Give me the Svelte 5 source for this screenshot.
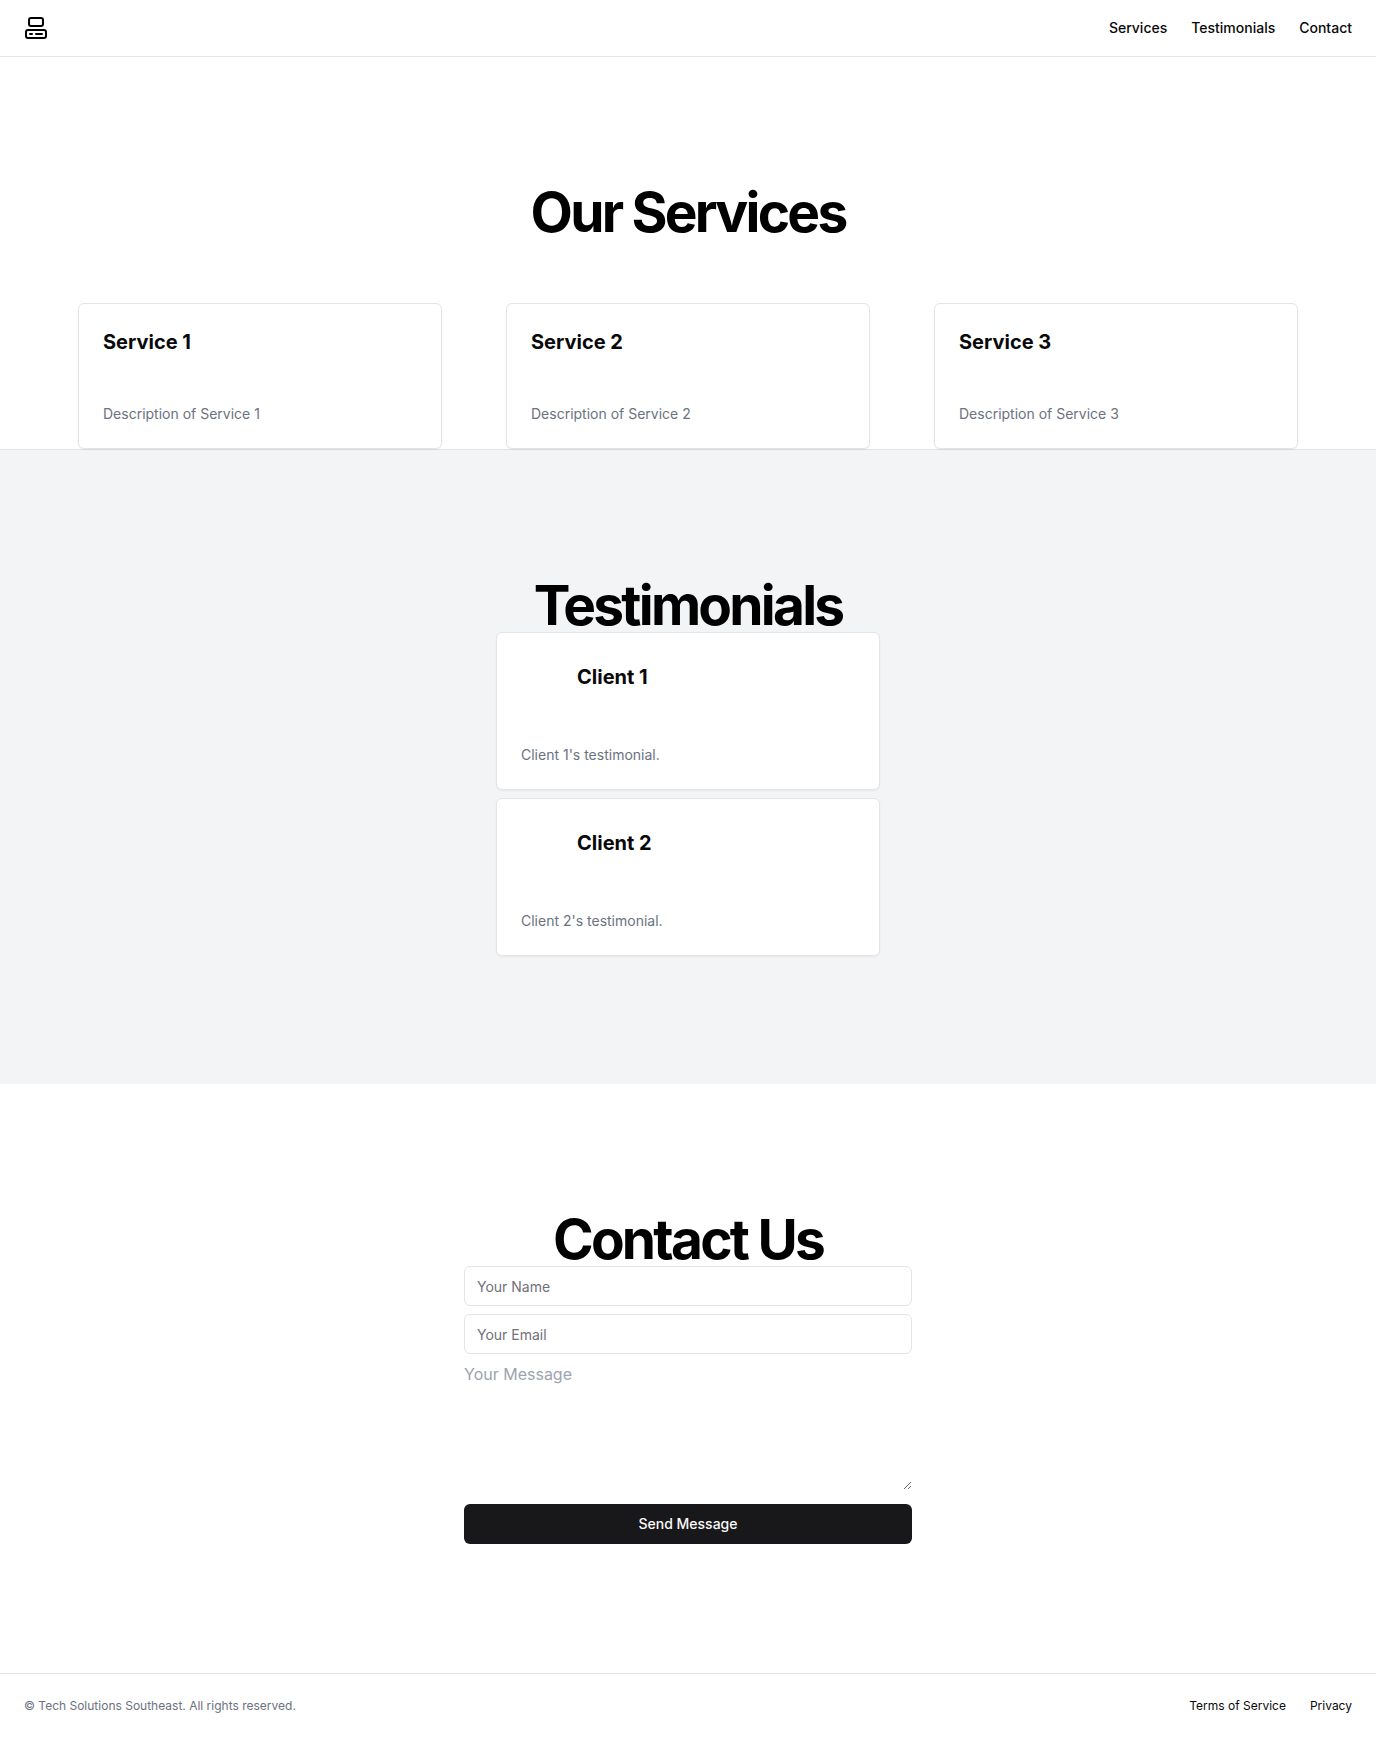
<script>
  const services = [1, 2, 3].map((n) => ({
    title: `Service ${n}`,
    text: `Description of Service ${n}`,
  }));
  const testimonials = [1, 2].map((n) => ({
    client: `Client ${n}`,
    text: `Client ${n}'s testimonial.`,
  }));
</script>

<div class="page">
  <header>
    <a class="logo" href="#top" aria-label="Tech Solutions Southeast">
      <svg viewBox="0 0 24 24" width="24" height="24" fill="none" stroke="currentColor" stroke-width="2" stroke-linecap="round" stroke-linejoin="round" aria-hidden="true">
        <rect width="14" height="8" x="5" y="2" rx="2" />
        <rect width="20" height="8" x="2" y="14" rx="2" />
        <path d="M6 18h2" />
        <path d="M12 18h6" />
      </svg>
    </a>
    <nav>
      <a href="#services">Services</a>
      <a href="#testimonials">Testimonials</a>
      <a href="#contact">Contact</a>
    </nav>
  </header>

  <main>
    <section id="services" class="services">
      <h2>Our Services</h2>
      <div class="grid">
        {#each services as service}
          <article class="card">
            <div class="card-head"><h3>{service.title}</h3></div>
            <p>{service.text}</p>
          </article>
        {/each}
      </div>
    </section>

    <section id="testimonials" class="testimonials">
      <h2>Testimonials</h2>
      <div class="stack quotes">
        {#each testimonials as item}
          <article class="card">
            <div class="card-head">
              <span class="avatar"></span>
              <h3>{item.client}</h3>
            </div>
            <p>{item.text}</p>
          </article>
        {/each}
      </div>
    </section>

    <section id="contact">
      <h2>Contact Us</h2>
      <form class="stack" onsubmit={(e) => e.preventDefault()}>
        <input type="text" aria-label="Your Name" placeholder="Your Name" />
        <input type="email" aria-label="Your Email" placeholder="Your Email" />
        <div class="message">
          <textarea aria-label="Your Message" placeholder="Your Message"></textarea>
        </div>
        <button type="submit">Send Message</button>
      </form>
    </section>
  </main>

  <footer>
    <p>© Tech Solutions Southeast. All rights reserved.</p>
    <nav>
      <a href="#terms">Terms of Service</a>
      <a href="#privacy">Privacy</a>
    </nav>
  </footer>
</div>

<style>
  :global(body) {
    margin: 0;
    background: #fff;
  }
  .page,
  .page * {
    box-sizing: border-box;
  }
  .page {
    display: flex;
    flex-direction: column;
    min-height: 100vh;
    color: #09090b;
    font-family: Inter, "Liberation Sans", sans-serif;
    font-size: 16px;
    line-height: 24px;
  }
  main {
    flex: 1;
  }
  h2,
  h3,
  p {
    margin: 0;
  }
  a {
    color: inherit;
    text-decoration: none;
  }
  a:hover {
    text-decoration: underline;
  }

  header {
    display: flex;
    align-items: center;
    justify-content: space-between;
    height: 56px;
    padding: 0 24px;
  }
  .logo {
    display: flex;
    color: #000;
  }
  nav {
    display: flex;
    gap: 24px;
  }
  header nav {
    font-size: 14px;
    font-weight: 500;
    line-height: 20px;
  }

  section {
    padding: 128px 24px;
  }
  .services,
  .testimonials {
    border-top: 1px solid #e4e4e7;
  }
  .services {
    padding-bottom: 0;
  }
  .testimonials {
    background: #f3f4f6;
  }
  h2 {
    color: #000;
    font-size: 55px;
    font-weight: 700;
    letter-spacing: -0.05em;
    line-height: 54px;
    text-align: center;
  }
  .grid {
    display: grid;
    grid-template-columns: repeat(auto-fit, minmax(240px, 1fr));
    gap: 64px;
    max-width: 1220px;
    margin: 64px auto 0;
  }
  .stack {
    display: flex;
    flex-direction: column;
    gap: 8px;
    max-width: 448px;
    margin: 0 auto;
  }
  .quotes {
    max-width: 384px;
  }

  .card {
    border: 1px solid #e4e4e7;
    border-radius: 6px;
    background: #fff;
    box-shadow: 0 1px 2px rgba(0, 0, 0, 0.05);
  }
  .card-head {
    display: flex;
    align-items: center;
    gap: 16px;
    padding: 24px;
  }
  .avatar {
    width: 40px;
    height: 40px;
    border-radius: 50%;
  }
  h3 {
    font-size: 20px;
    font-weight: 700;
    line-height: 28px;
  }
  .card p {
    padding: 24px;
    color: #6b7280;
    font-size: 14px;
    line-height: 20px;
  }

  input,
  textarea,
  button {
    font-family: inherit;
    color: inherit;
  }
  input {
    width: 100%;
    height: 40px;
    padding: 8px 12px;
    border: 1px solid #e4e4e7;
    border-radius: 6px;
    background: #fff;
    font-size: 14px;
    line-height: 20px;
  }
  input::placeholder {
    color: #71717a;
  }
  .message {
    padding-bottom: 6px;
  }
  textarea {
    display: block;
    width: 100%;
    height: 128px;
    padding: 0;
    border: 0;
    background: transparent;
    font-size: 16px;
    line-height: 24px;
    resize: vertical;
  }
  textarea::placeholder {
    color: #9ca3af;
  }
  button {
    height: 40px;
    padding: 8px 16px;
    border: 0;
    border-radius: 6px;
    background: #18181b;
    color: #fafafa;
    font-size: 14px;
    font-weight: 500;
    line-height: 20px;
    cursor: pointer;
  }

  footer {
    display: flex;
    flex-wrap: wrap;
    align-items: center;
    justify-content: space-between;
    gap: 8px;
    padding: 24px;
    border-top: 1px solid #e4e4e7;
    font-size: 12px;
    line-height: 16px;
  }
  footer p {
    color: #6b7280;
  }
</style>
